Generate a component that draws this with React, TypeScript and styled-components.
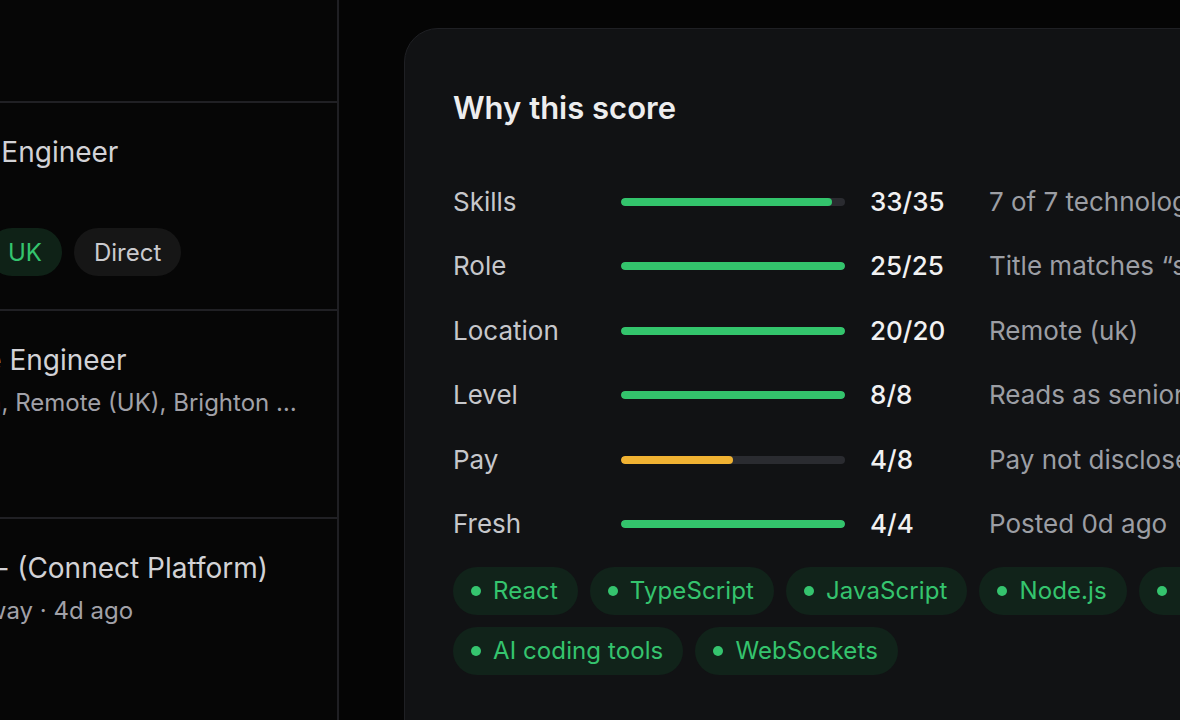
import React from "react";
import styled, { createGlobalStyle } from "styled-components";

const GlobalStyle = createGlobalStyle`
  * { box-sizing: border-box; }
  html, body {
    margin: 0;
    padding: 0;
    background: #050505;
    font-family: Inter, "Noto Sans", sans-serif;
    -webkit-font-smoothing: antialiased;
  }
`;

// Layout
const Page = styled.div`
  display: flex;
  width: 1180px;
  height: 720px;
  overflow: hidden;
  background: #050505;
`;

const ListPanel = styled.aside`
  width: 339px;
  flex-shrink: 0;
  height: 100%;
  overflow: hidden;
  background: #060606;
  border-right: 2px solid #1f1f23;
`;

const ListHeader = styled.div`
  height: 101px;
`;

// the list is scrolled sideways, so rows start left of the visible edge
const JobRow = styled.div`
  height: 208px;
  margin-left: -240px;
  padding: 32px 40px 0 0;
  border-top: 2px solid #202024;
  display: flex;
  flex-direction: column;
`;

const JobTitle = styled.div`
  color: #d2d2d6;
  font-size: 28px;
  line-height: 34px;
  white-space: nowrap;
`;

const JobMeta = styled.div`
  margin-top: 11px;
  color: #a1a1a8;
  font-size: 24px;
  line-height: 30px;
  white-space: nowrap;
  overflow: hidden;
  text-overflow: ellipsis;
`;

const JobTags = styled.div`
  display: flex;
  gap: 12px;
  margin-top: 18px;
`;

const JobTag = styled.span<{ $tone?: "green" | "gray" }>`
  display: inline-flex;
  align-items: center;
  height: 48px;
  padding: 0 20px;
  border-radius: 999px;
  font-size: 24px;
  white-space: nowrap;
  background: ${(p) => (p.$tone === "green" ? "#0f2217" : "#161616")};
  color: ${(p) => (p.$tone === "green" ? "#34c46e" : "#cacace")};
`;

const Main = styled.main`
  flex: 1;
  padding: 28px 0 0 65px;
`;

const ScoreCard = styled.section`
  width: 1100px;
  min-height: 760px;
  padding: 61px 48px 0 48px;
  background: #111214;
  border: 1px solid #1f2024;
  border-radius: 34px;
`;

const CardTitle = styled.h2`
  margin: 0;
  color: #ededee;
  font-size: 31px;
  line-height: 36px;
  font-weight: 600;
`;

const Breakdown = styled.div`
  margin-top: 60px;
  display: grid;
  grid-template-columns: 168px 249px 119px 1fr;
  row-gap: 32.4px;
  align-items: center;
`;

const Label = styled.span`
  color: #c6c7cb;
  font-size: 26px;
  line-height: 32px;
`;

const BarCell = styled.div`
  padding-right: 25px;
`;

const BarTrack = styled.div`
  height: 8px;
  border-radius: 4px;
  background: #2a2b30;
  overflow: hidden;
`;

const BarFill = styled.div<{ $warn?: boolean }>`
  height: 100%;
  border-radius: 4px;
  background: ${(p) => (p.$warn ? "#f0b232" : "#33c46c")};
`;

const Points = styled.span`
  color: #f1f1f2;
  font-size: 26px;
  line-height: 32px;
  font-weight: 500;
`;

const Reason = styled.span`
  color: #9c9ea4;
  font-size: 26px;
  line-height: 32px;
  white-space: nowrap;
`;

const SkillList = styled.div`
  margin-top: 27px;
  display: flex;
  flex-wrap: wrap;
  gap: 12px;
`;

const SkillChip = styled.span`
  display: inline-flex;
  align-items: center;
  gap: 12px;
  height: 48px;
  padding: 0 20px 0 18px;
  border-radius: 999px;
  background: #11231a;
  color: #35c46e;
  font-size: 24px;
  letter-spacing: 0.1px;
  white-space: nowrap;

  &::before {
    content: "";
    width: 10px;
    height: 10px;
    border-radius: 50%;
    background: #35c46e;
  }
`;

const scores = [
  { label: "Skills", got: 33, max: 35, reason: "7 of 7 technologies you listed" },
  { label: "Role", got: 25, max: 25, reason: "Title matches \u201csenior engineer\u201d" },
  { label: "Location", got: 20, max: 20, reason: "Remote (uk)" },
  { label: "Level", got: 8, max: 8, reason: "Reads as senior level" },
  { label: "Pay", got: 4, max: 8, reason: "Pay not disclosed" },
  { label: "Fresh", got: 4, max: 4, reason: "Posted 0d ago" },
];

const skills = [
  "React",
  "TypeScript",
  "JavaScript",
  "Node.js",
  "PostgreSQL",
  "AI coding tools",
  "WebSockets",
];

export default function App() {
  return (
    <>
      <GlobalStyle />
      <Page>
        <ListPanel>
          <ListHeader />
          <JobRow>
            <JobTitle>Senior JavaScript Engineer</JobTitle>
            <JobMeta>Wise</JobMeta>
            <JobTags>
              <JobTag $tone="green">Senior</JobTag>
              <JobTag $tone="green">£71k</JobTag>
              <JobTag $tone="green">UK</JobTag>
              <JobTag>Direct</JobTag>
            </JobTags>
          </JobRow>
          <JobRow>
            <JobTitle>Principal Software Engineer</JobTitle>
            <JobMeta>Brandwatch · London, Remote (UK), Brighton &amp; Hove</JobMeta>
          </JobRow>
          <JobRow>
            <JobTitle>Product Engineer - (Connect Platform)</JobTitle>
            <JobMeta>Vend · Remote · Norway · 4d ago</JobMeta>
          </JobRow>
        </ListPanel>
        <Main>
          <ScoreCard>
            <CardTitle>Why this score</CardTitle>
            <Breakdown>
              {scores.map((s) => (
                <React.Fragment key={s.label}>
                  <Label>{s.label}</Label>
                  <BarCell>
                    <BarTrack>
                      <BarFill
                        $warn={s.got / s.max < 0.6}
                        style={{ width: `${(s.got / s.max) * 100}%` }}
                      />
                    </BarTrack>
                  </BarCell>
                  <Points>
                    {s.got}/{s.max}
                  </Points>
                  <Reason>{s.reason}</Reason>
                </React.Fragment>
              ))}
            </Breakdown>
            <SkillList>
              {skills.map((s) => (
                <SkillChip key={s}>{s}</SkillChip>
              ))}
            </SkillList>
          </ScoreCard>
        </Main>
      </Page>
    </>
  );
}
